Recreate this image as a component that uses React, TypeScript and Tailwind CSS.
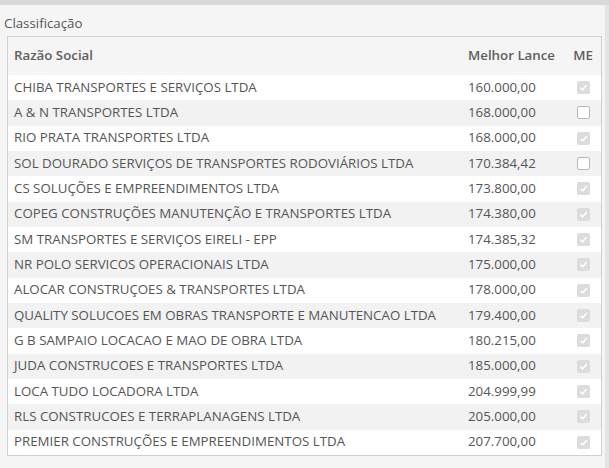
import React from 'react';

type Row = { name: string; lance: string; me: boolean };

const rows: Row[] = [
  { name: 'CHIBA TRANSPORTES E SERVIÇOS LTDA', lance: '160.000,00', me: true },
  { name: 'A & N TRANSPORTES LTDA', lance: '168.000,00', me: false },
  { name: 'RIO PRATA TRANSPORTES LTDA', lance: '168.000,00', me: true },
  { name: 'SOL DOURADO SERVIÇOS DE TRANSPORTES RODOVIÁRIOS LTDA', lance: '170.384,42', me: false },
  { name: 'CS SOLUÇÕES E EMPREENDIMENTOS LTDA', lance: '173.800,00', me: true },
  { name: 'COPEG CONSTRUÇÕES MANUTENÇÃO E TRANSPORTES LTDA', lance: '174.380,00', me: true },
  { name: 'SM TRANSPORTES E SERVIÇOS EIRELI - EPP', lance: '174.385,32', me: true },
  { name: 'NR POLO SERVICOS OPERACIONAIS LTDA', lance: '175.000,00', me: true },
  { name: 'ALOCAR CONSTRUÇOES & TRANSPORTES LTDA', lance: '178.000,00', me: true },
  { name: 'QUALITY SOLUCOES EM OBRAS TRANSPORTE E MANUTENCAO LTDA', lance: '179.400,00', me: true },
  { name: 'G B SAMPAIO LOCACAO E MAO DE OBRA LTDA', lance: '180.215,00', me: true },
  { name: 'JUDA CONSTRUCOES E TRANSPORTES LTDA', lance: '185.000,00', me: true },
  { name: 'LOCA TUDO LOCADORA LTDA', lance: '204.999,99', me: true },
  { name: 'RLS CONSTRUCOES E TERRAPLANAGENS LTDA', lance: '205.000,00', me: true },
  { name: 'PREMIER CONSTRUÇÕES E EMPREENDIMENTOS LTDA', lance: '207.700,00', me: true },
];

const Check = ({ on }: { on: boolean }) =>
  on ? (
    <span className="inline-flex h-[13px] w-[13px] items-center justify-center rounded-[2px] bg-[#dcdcdc]">
      <svg width="9" height="9" viewBox="0 0 10 10" fill="none">
        <path d="M1.5 5.2 4 7.6 8.6 2.2" stroke="#fff" strokeWidth="1.6" />
      </svg>
    </span>
  ) : (
    <span className="inline-block h-[13px] w-[13px] rounded-[2px] border border-[#b9b9b9] bg-white" />
  );

export default function App() {
  return (
    <div
      className="flex h-[468px] w-[609px] flex-col bg-[#f5f5f5] text-[13.3px] text-[#555]"
      style={{ fontFamily: '"Open Sans", "Segoe UI", sans-serif' }}
    >
      <div className="h-[5px] bg-[#d9d9d9]" />
      <div className="flex flex-1">
        <div className="flex-1 pl-[4px] pr-[3px]">
          <div className="pt-[9px] text-[13.3px] leading-[18px] text-[#555]">Classificação</div>
          <div className="mt-[4px] ml-[3px] border border-[#d0d0d0]">
            <div className="flex h-[38px] items-center font-semibold text-[#5e5e5e]">
              <div className="flex-1 pl-[6px]">Razão Social</div>
              <div className="w-[99px]">Melhor Lance</div>
              <div className="w-[34px] pr-[2px] text-center">ME</div>
            </div>
            {rows.map((r, i) => (
              <div
                key={r.name}
                className={`flex h-[25.33px] items-center ${i % 2 === 0 ? 'bg-white' : 'bg-[#f2f2f2]'}`}
              >
                <div className="flex-1 truncate pl-[6px]">{r.name}</div>
                <div className="w-[99px]">{r.lance}</div>
                <div className="flex w-[34px] justify-center pr-[2px]">
                  <Check on={r.me} />
                </div>
              </div>
            ))}
          </div>
        </div>
        <div className="w-[4px] bg-[#e4e4e4]" />
      </div>
    </div>
  );
}
